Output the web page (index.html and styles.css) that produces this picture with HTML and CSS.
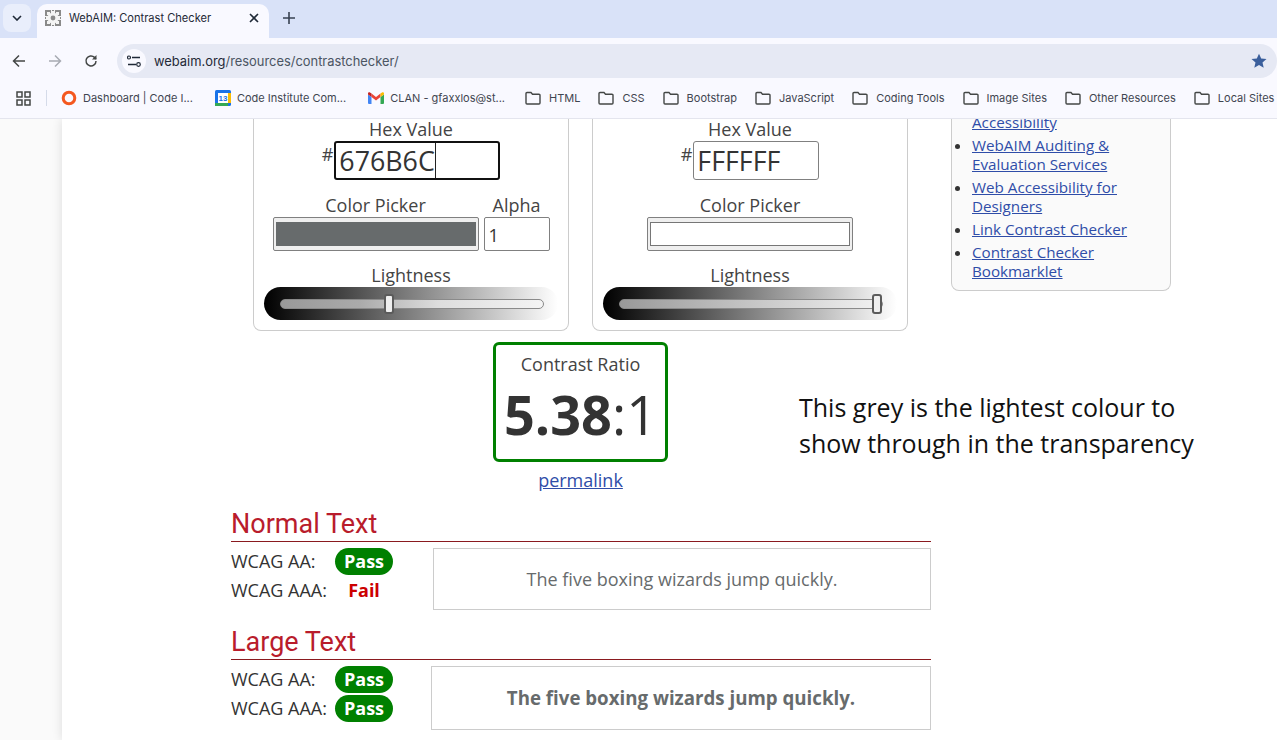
FILE: index.html
```html
<!DOCTYPE html>
<html lang="en">
<head>
  <meta charset="UTF-8" />
  <title>WebAIM: Contrast Checker</title>
  <link rel="stylesheet" href="styles.css">
</head>
<body>
  <!-- Browser chrome -->
  <div class="tabbar">
    <div class="tab-menu">
      <svg width="10" height="6" viewBox="0 0 10 6"><path d="M1 1l4 4 4-4" fill="none" stroke="#1f2937" stroke-width="1.6"/></svg>
    </div>
    <div class="tab">
      <svg class="favicon" width="16" height="16" viewBox="0 0 16 16">
        <rect width="16" height="16" fill="#8a8a8a"/>
        <circle cx="8" cy="8" r="5.600" fill="#f4f4f4"/>
        <path d="M6 0h4v16H6zM0 6h16v4H0z" fill="#f4f4f4"/>
        <path d="M2 2h3v3H2zM11 2h3v3h-3zM2 11h3v3H2zM11 11h3v3h-3z" fill="#f4f4f4"/>
        <path d="M7 0h2v1H7zM7 15h2v1H7zM0 7h1v2H0zM15 7h1v2h-1z" fill="#8a8a8a"/>
        <circle cx="8" cy="8" r="2.400" fill="#8a8a8a"/>
      </svg>
      <span class="tab-title">WebAIM: Contrast Checker</span>
      <svg width="10" height="10" viewBox="0 0 10 10"><path d="M1 1l8 8M9 1l-8 8" stroke="#1f2937" stroke-width="1.6"/></svg>
    </div>
    <svg class="new-tab" width="12" height="12" viewBox="0 0 12 12"><path d="M6 0v12M0 6h12" stroke="#374151" stroke-width="1.6"/></svg>
  </div>

  <div class="toolbar">
    <svg class="nav-icon" width="14" height="14" viewBox="0 0 14 14"><path d="M13 7H2M7 1.500L1.500 7 7 12.500" fill="none" stroke="#444746" stroke-width="1.5"/></svg>
    <svg class="nav-icon" width="14" height="14" viewBox="0 0 14 14"><path d="M1 7h11M7 1.500L12.500 7 7 12.500" fill="none" stroke="#a8abb3" stroke-width="1.500"/></svg>
    <svg class="nav-icon" width="14" height="14" viewBox="0 0 14 14"><path d="M12 7a5 5 0 1 1-1.500-3.600L12 5" fill="none" stroke="#444746" stroke-width="1.500"/><path d="M12.500 1v4.500H8z" fill="#444746"/></svg>
    <div class="omnibox">
      <span class="site-info">
        <svg width="14" height="12" viewBox="0 0 14 12"><path d="M5 2.500h8M1 9.500h8" stroke="#1f2937" stroke-width="1.400"/><circle cx="2" cy="2.500" r="1.500" fill="none" stroke="#1f2937" stroke-width="1.200"/><circle cx="11.500" cy="9.500" r="1.800" fill="none" stroke="#1f2937" stroke-width="1.200"/></svg>
      </span>
      <span class="url"><span class="url-host">webaim.org</span>/resources/contrastchecker/</span>
      <svg class="star" width="16" height="16" viewBox="0 0 16 16"><path d="M8 .7l2.200 4.900 5.300.5-4 3.500 1.200 5.200L8 12.100l-4.700 2.700 1.200-5.200-4-3.500 5.300-.5z" fill="#3b5f9c"/></svg>
    </div>
  </div>

  <div class="bookmarks">
    <svg class="apps" width="15" height="15" viewBox="0 0 15 15"><path d="M1 1h5v5H1zM9 1h5v5H9zM1 9h5v5H1zM9 9h5v5H9z" fill="none" stroke="#444746" stroke-width="1.500"/></svg>
    <span class="bm-sep"></span>
    <span class="bm bm-site bm-first">
      <svg width="16" height="16" viewBox="0 0 16 16"><circle cx="8" cy="8" r="5.800" fill="none" stroke="#f4581f" stroke-width="3"/></svg>
      Dashboard | Code I...
    </span>
    <span class="bm bm-site">
      <svg width="16" height="16" viewBox="0 0 16 16"><rect width="16" height="16" rx="1.500" fill="#1a73e8"/><rect y="13" width="13" height="3" fill="#34a853"/><rect x="13" y="3" width="3" height="10" fill="#fbbc04"/><rect x="3" y="3" width="10" height="10" fill="#fff"/><text x="8" y="11" class="cal-num">13</text></svg>
      Code Institute Com...
    </span>
    <span class="bm bm-mail">
      <svg width="16" height="12" viewBox="0 0 16 12"><path d="M0 2.500V11a1 1 0 0 0 1 1h2.500V5z" fill="#4285f4"/><path d="M16 2.500V11a1 1 0 0 1-1 1h-2.500V5z" fill="#34a853"/><path d="M3.500 5L8 8.500 12.500 5V1.500L8 5 3.500 1.500z" fill="#ea4335"/><path d="M0 2.500L3.500 5V1.500L2 .4C1.200-.1 0 .4 0 1.500z" fill="#c5221f"/><path d="M16 2.500L12.500 5V1.500L14 .4c.8-.5 2 0 2 1.100z" fill="#fbbc04"/></svg>
      CLAN - gfaxxlos@st...
    </span>
    <span class="bm"><svg class="folder" viewBox="0 0 16 14"><use href="#folder"/></svg>HTML</span>
    <span class="bm"><svg class="folder" viewBox="0 0 16 14"><use href="#folder"/></svg>CSS</span>
    <span class="bm"><svg class="folder" viewBox="0 0 16 14"><use href="#folder"/></svg>Bootstrap</span>
    <span class="bm"><svg class="folder" viewBox="0 0 16 14"><use href="#folder"/></svg>JavaScript</span>
    <span class="bm"><svg class="folder" viewBox="0 0 16 14"><use href="#folder"/></svg>Coding Tools</span>
    <span class="bm"><svg class="folder" viewBox="0 0 16 14"><use href="#folder"/></svg>Image Sites</span>
    <span class="bm"><svg class="folder" viewBox="0 0 16 14"><use href="#folder"/></svg>Other Resources</span>
    <span class="bm"><svg class="folder" viewBox="0 0 16 14"><use href="#folder"/></svg>Local Sites</span>
  </div>

  <svg class="defs" width="0" height="0">
    <symbol id="folder" viewBox="0 0 16 14">
      <path d="M1 2.500a1 1 0 0 1 1-1h4l1.500 1.700H14a1 1 0 0 1 1 1V12a1 1 0 0 1-1 1H2a1 1 0 0 1-1-1z" fill="none" stroke="#444746" stroke-width="1.400"/>
    </symbol>
  </svg>

  <!-- Page viewport, scrolled part way down -->
  <div class="viewport">
    <div class="page">
      <div class="checker">
        <div class="colors">
          <section class="color-box">
            <div class="label hex-label">Hex Value</div>
            <div class="hex-row">
              <span class="hash">#</span>
              <div class="hex-input hex-focus"><span class="hex-text">676B6C</span><span class="caret"></span></div>
            </div>
            <div class="picker-row">
              <div class="picker-col">
                <div class="label">Color Picker</div>
                <div class="swatch swatch-wide"><div class="swatch-fill swatch-grey"></div></div>
              </div>
              <div class="alpha-col">
                <div class="label">Alpha</div>
                <div class="alpha-input">1</div>
              </div>
            </div>
            <div class="label light-label">Lightness</div>
            <div class="slider">
              <div class="track track-mid"><span class="thumb thumb-mid"></span></div>
            </div>
          </section>

          <section class="color-box color-box-fg">
            <div class="label hex-label">Hex Value</div>
            <div class="hex-row">
              <span class="hash">#</span>
              <div class="hex-input hex-plain"><span class="hex-text">FFFFFF</span></div>
            </div>
            <div class="picker-row">
              <div class="picker-col">
                <div class="label">Color Picker</div>
                <div class="swatch swatch-wide"><div class="swatch-fill swatch-white"></div></div>
              </div>
            </div>
            <div class="label light-label">Lightness</div>
            <div class="slider">
              <div class="track track-full"><span class="thumb thumb-end"></span></div>
            </div>
          </section>
        </div>

        <div class="ratio-row">
          <div class="ratio-box">
            <div class="ratio-title">Contrast Ratio</div>
            <div class="ratio-value"><strong>5.38</strong>:1</div>
          </div>
          <a class="permalink" href="#">permalink</a>
        </div>

        <h2 class="result-head">Normal Text</h2>
        <div class="result">
          <div class="wcag">
            <div class="wcag-row"><span class="wcag-name">WCAG AA:</span><span class="pass">Pass</span></div>
            <div class="wcag-row"><span class="wcag-name">WCAG AAA:</span><span class="fail">Fail</span></div>
          </div>
          <div class="sample sample-normal">The five boxing wizards jump quickly.</div>
        </div>

        <h2 class="result-head result-head-large">Large Text</h2>
        <div class="result">
          <div class="wcag">
            <div class="wcag-row"><span class="wcag-name">WCAG AA:</span><span class="pass">Pass</span></div>
            <div class="wcag-row"><span class="wcag-name">WCAG AAA:</span><span class="pass">Pass</span></div>
          </div>
          <div class="sample sample-large">The five boxing wizards jump quickly.</div>
        </div>
      </div>

      <aside class="side">
        <ul class="side-box">
          <li class="side-cut"><a href="#">Accessibility</a></li>
          <li><a href="#">WebAIM Auditing &amp; Evaluation Services</a></li>
          <li><a href="#">Web Accessibility for Designers</a></li>
          <li><a href="#">Link Contrast Checker</a></li>
          <li><a href="#">Contrast Checker Bookmarklet</a></li>
        </ul>
      </aside>

      <!-- annotation pasted over the page -->
      <p class="note">This grey is the lightest colour to show through in the transparency</p>
    </div>
  </div>
</body>
</html>
```

FILE: styles.css
```css
html, body {
  margin: 0;
  height: 740px;
  overflow: hidden;
}

body {
  font-family: 'Open Sans', sans-serif;
  color: #333;
  background-color: #fff;
}

.defs {
  position: absolute;
}

/* Browser chrome */
.tabbar {
  height: 38px;
  background-color: #d9e2f8;
  display: flex;
  align-items: flex-end;
  padding-left: 3px;
}

.tab-menu {
  width: 28px;
  height: 28px;
  margin-bottom: 6px;
  border-radius: 8px;
  background-color: #e9eefb;
  display: flex;
  align-items: center;
  justify-content: center;
}

.tab {
  width: 232px;
  height: 34px;
  margin-left: 6px;
  padding: 0 10px 6px 8px;
  box-sizing: border-box;
  background-color: #f9f9ff;
  border-radius: 10px 10px 0 0;
  display: flex;
  align-items: center;
  font: 11.100px Inter, 'Noto Sans', sans-serif;
  color: #1f2937;
}

.favicon {
  margin-right: 8px;
  flex: none;
}

.tab-title {
  flex: 1;
  white-space: nowrap;
}

.new-tab {
  margin: 0 0 14px 14px;
}

.toolbar {
  height: 40px;
  background-color: #f9f9ff;
  display: flex;
  align-items: center;
  padding: 6px 0 0 12px;
  box-sizing: border-box;
}

.nav-icon {
  margin-right: 22px;
  flex: none;
}

.omnibox {
  flex: 1;
  height: 34px;
  margin-left: -3px;
  padding: 0 10px 0 5px;
  border-radius: 17px;
  background-color: #e6e9f4;
  display: flex;
  align-items: center;
  font: 12.900px Inter, 'Noto Sans', sans-serif;
  color: #4b5563;
}

.site-info {
  width: 24px;
  height: 24px;
  border-radius: 50%;
  background-color: #f9f9ff;
  display: flex;
  align-items: center;
  justify-content: center;
  margin-right: 8px;
}

.url {
  flex: 1;
  white-space: nowrap;
}

.url-host {
  color: #1f2937;
}

.bookmarks {
  height: 41px;
  box-sizing: border-box;
  background-color: #f9f9ff;
  border-bottom: 1px solid #e4e5ee;
  padding-left: 16px;
  display: flex;
  align-items: center;
  white-space: nowrap;
  overflow: hidden;
  font: 11px Inter, 'Noto Sans', sans-serif;
  color: #3f4550;
}

.apps {
  flex: none;
}

.bm-sep {
  width: 1px;
  height: 16px;
  background-color: #d5dbe9;
  margin: 0 14px 0 15px;
  flex: none;
}

.bm {
  display: flex;
  align-items: center;
  gap: 8px;
  margin-right: 18px;
  flex: none;
}

.bm-site {
  gap: 6px;
  margin-right: 22px;
}

.bm-mail {
  gap: 6px;
  margin-right: 20px;
}

.bm svg {
  flex: none;
}

.folder {
  width: 16px;
  height: 14px;
}

.cal-num {
  font: 700 8px 'Liberation Sans', sans-serif;
  text-anchor: middle;
  fill: #1a73e8;
}

/* Page */
.viewport {
  height: 621px;
  overflow: hidden;
  background-color: #fafafa;
}

.page {
  position: relative;
  width: 1215px;
  height: 621px;
  margin-left: 62px;
  background-color: #fff;
  box-shadow: 0 0 10px rgba(0, 0, 0, 0.12);
  display: flex;
  overflow: hidden;
}

.checker {
  width: 700px;
  margin-left: 169px;
  flex: none;
}

.colors {
  display: flex;
  gap: 23px;
  margin-left: 22px;
}

.color-box {
  width: 316px;
  height: 212px;
  box-sizing: border-box;
  border: 1px solid #ccc;
  border-top: 0;
  border-radius: 0 0 8px 8px;
  text-align: center;
  padding: 0 10px;
}

.label {
  font-size: 18px;
  line-height: 22px;
  color: #444;
}

.hex-label {
  line-height: 20px;
}

.hex-row {
  display: flex;
  justify-content: center;
  margin-top: 2px;
  height: 40px;
}

.hash {
  font-size: 18px;
  line-height: 26px;
  margin-right: 1px;
  color: #444;
}

.hex-input {
  height: 39px;
  box-sizing: border-box;
  border-radius: 3px;
  text-align: left;
  padding-left: 3px;
  font-size: 26.800px;
  line-height: 36px;
  color: #333;
  display: flex;
}

.hex-focus {
  width: 166px;
  border: 2px solid #111;
}

.hex-plain {
  width: 126px;
  border: 1px solid #808080;
  padding-left: 3px;
  line-height: 38px;
}

.caret {
  width: 1px;
  background-color: #222;
  height: 35px;
}

.picker-row {
  display: flex;
  justify-content: center;
  gap: 5px;
  margin-top: 13px;
}

.picker-col .label,
.alpha-col .label {
  margin-bottom: 1px;
}

.swatch {
  height: 34px;
  box-sizing: border-box;
  border: 1px solid #808080;
  border-radius: 2px;
  background-color: #efefef;
  padding: 4px 2px;
}

.swatch-wide {
  width: 206px;
}

.swatch-fill {
  height: 100%;
}

.swatch-grey {
  background-color: #676b6c;
}

.swatch-white {
  background-color: #fff;
  border: 1px solid #767676;
  box-sizing: border-box;
}

.alpha-col {
  width: 66px;
}

.alpha-input {
  height: 34px;
  box-sizing: border-box;
  border: 1px solid #808080;
  border-radius: 2px;
  text-align: left;
  padding-left: 4px;
  font-size: 18px;
  line-height: 34px;
}

.light-label {
  margin-top: 13px;
}

.slider {
  width: 294px;
  height: 33px;
  margin-top: 1px;
  border-radius: 17px;
  background: linear-gradient(to right, #000, #fff);
  padding: 12px 16px 0;
  box-sizing: border-box;
}

.track {
  height: 10px;
  width: 264px;
  box-sizing: border-box;
  border: 1px solid #8a8a8a;
  border-radius: 6px;
  position: relative;
}

.track-mid {
  background: linear-gradient(to right, #999 0, #aaa 30%, #ddd 60%, #f4f4f4 100%);
}

.track-full {
  background: linear-gradient(to right, #999, #f2f2f2);
}

.thumb {
  position: absolute;
  top: -6px;
  width: 10px;
  height: 20px;
  box-sizing: border-box;
  border: 2px solid #5b5b5b;
  border-radius: 3px;
  background-color: #efefef;
}

.thumb-mid {
  left: 103px;
}

.thumb-end {
  right: 0;
}

.ratio-row {
  width: 175px;
  margin: 11px 0 0 262px;
  text-align: center;
}

.ratio-box {
  height: 120px;
  box-sizing: border-box;
  border: 3px solid #008000;
  border-radius: 6px;
  padding-top: 7px;
}

.ratio-title {
  font-size: 18px;
  line-height: 24px;
  color: #444;
}

.ratio-value {
  font-size: 54px;
  line-height: 68px;
  margin-top: 4px;
  color: #333;
}

.permalink {
  display: block;
  font-size: 18px;
  line-height: 24px;
  margin-top: 6px;
  color: #2f4da8;
}

.result-head {
  font: 400 27px/32px Roboto, sans-serif;
  color: #b91c2c;
  margin: 16px 0 0;
  border-bottom: 1px solid #8a1a1f;
  padding-bottom: 1px;
  width: 700px;
}

.result-head-large {
  margin-top: 16px;
}

.result {
  display: flex;
  justify-content: space-between;
  margin-top: 6px;
}

.wcag {
  width: 170px;
  margin-top: -1px;
}

.wcag-row {
  display: flex;
  height: 29px;
  align-items: center;
  font-size: 18px;
  color: #333;
}

.wcag-name {
  width: 104px;
  flex: none;
  padding-bottom: 2px;
}

.pass {
  width: 58px;
  height: 27px;
  line-height: 27px;
  border-radius: 14px;
  background-color: #008000;
  color: #fff;
  font-weight: 700;
  text-align: center;
}

.fail {
  width: 58px;
  color: #c00;
  font-weight: 700;
  text-align: center;
  padding-bottom: 2px;
}

.sample {
  box-sizing: border-box;
  border: 1px solid #ccc;
  color: #676b6c;
  text-align: center;
  font-size: 18px;
}

.sample-normal {
  width: 498px;
  height: 62px;
  line-height: 60px;
}

.sample-large {
  width: 500px;
  height: 64px;
  line-height: 62px;
  font-weight: 700;
  font-size: 18.700px;
}

/* Right column */
.side {
  margin-left: 20px;
  flex: none;
}

.side-box {
  width: 220px;
  height: 178px;
  box-sizing: border-box;
  margin: -6px 0 0;
  padding: 0 0 0 20px;
  list-style: disc;
  border: 1px solid #ccc;
  border-top: 0;
  border-radius: 0 0 8px 8px;
  background-color: #fafafa;
  font-size: 15.200px;
  line-height: 19px;
}

.side-box li {
  margin-bottom: 4px;
}

.side-box .side-cut {
  list-style: none;
}

.side-box a {
  color: #2f4da8;
}

.note {
  position: absolute;
  left: 737px;
  top: 270px;
  margin: 0;
  width: 440px;
  font-size: 25px;
  line-height: 36px;
  color: #111;
}
```
